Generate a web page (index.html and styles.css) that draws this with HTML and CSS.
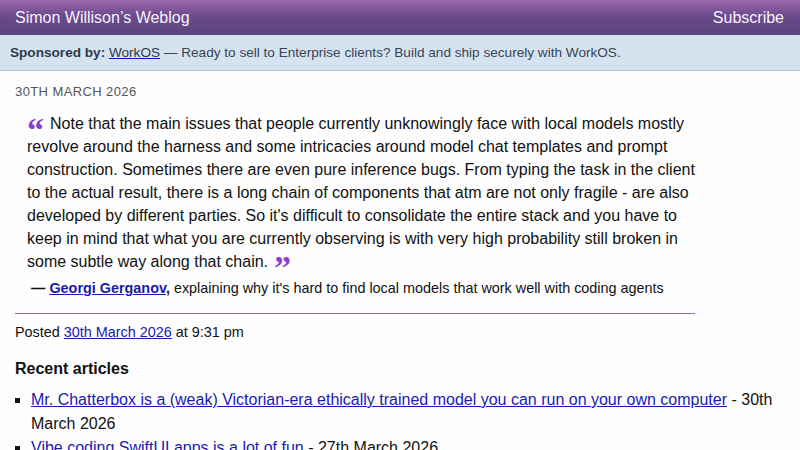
FILE: index.html
```html
<!DOCTYPE html>
<html lang="en">
<head>
<meta charset="utf-8">
<title>Simon Willison’s Weblog</title>
<link rel="stylesheet" href="styles.css">
</head>
<body>
<header class="hdr">
  <a class="hdr-title" href="#">Simon Willison’s Weblog</a>
  <a class="hdr-sub" href="#">Subscribe</a>
</header>
<div class="sponsor">
  <strong>Sponsored by:</strong> <a href="#">WorkOS</a> — Ready to sell to Enterprise clients? Build and ship securely with WorkOS.
</div>
<main class="main">
  <div class="entry">
    <div class="date">30th March 2026</div>
    <blockquote class="quote">
      <p><span class="q-open">“</span>Note that the main issues that people currently unknowingly face with local models mostly revolve around the harness and some intricacies around model chat templates and prompt construction. Sometimes there are even pure inference bugs. From typing the task in the client to the actual result, there is a long chain of components that atm are not only fragile - are also developed by different parties. So it's difficult to consolidate the entire stack and you have to keep in mind that what you are currently observing is with very high probability still broken in some subtle way along that chain.<span class="q-close">”</span></p>
    </blockquote>
    <p class="cite">— <a href="#">Georgi Gerganov</a>, <span class="cite-ctx">explaining why it's hard to find local models that work well with coding agents</span></p>
    <hr class="rule">
    <p class="posted">Posted <a href="#">30th March 2026</a> at 9:31 pm</p>
  </div>
  <h3 class="recent-h">Recent articles</h3>
  <ul class="recent">
    <li><a href="#">Mr. Chatterbox is a (weak) Victorian-era ethically trained model you can run on your own computer</a> - 30th March 2026</li>
    <li><a href="#">Vibe coding SwiftUI apps is a lot of fun</a> - 27th March 2026</li>
  </ul>
</main>
</body>
</html>
```

FILE: styles.css
```css
html, body {
  margin: 0;
  padding: 0;
}
body {
  background: #fefefe;
  color: #111;
  font-family: "Liberation Sans", Arial, Helvetica, sans-serif;
  font-size: 16px;
}
a {
  color: #1a1ab0;
}
.hdr {
  display: flex;
  justify-content: space-between;
  align-items: center;
  height: 35px;
  padding: 0 16px 0 15px;
  box-sizing: border-box;
  background: linear-gradient(to bottom, #9b68ad 0%, #6a4a8c 45%, #5e4480 100%);
}
.hdr a {
  color: #f8f2fb;
  text-decoration: none;
  font-size: 16px;
}
.sponsor {
  height: 36px;
  box-sizing: border-box;
  padding: 0 10px;
  line-height: 36px;
  white-space: nowrap;
  background: #d5e3f0;
  border-bottom: 1px solid #b7c6d6;
  color: #3a4454;
  font-size: 13.6px;
}
.sponsor strong {
  color: #2f3a4a;
}
.sponsor a {
  color: #2f3a4a;
  text-decoration-color: #1a1ab0;
}
.main {
  padding: 0 15px;
}
.entry {
  width: 680px;
}
.date {
  margin-top: 13px;
  font-size: 13px;
  line-height: 16px;
  text-transform: uppercase;
  letter-spacing: 0.4px;
  color: #555;
}
.quote {
  margin: 12px -10px 0 12px;
  padding: 0;
}
.quote p {
  margin: 0;
  font-size: 16px;
  line-height: 23px;
  color: #111;
}
.q-open, .q-close {
  font-family: "Liberation Serif", "Times New Roman", serif;
  font-weight: bold;
  color: #8a3fd0;
  font-size: 34px;
  line-height: 0;
  vertical-align: -12px;
}
.q-open {
  margin-right: 6px;
}
.q-close {
  margin-left: 6px;
}
.cite {
  margin: 3px 0 0 16px;
  font-size: 14.4px;
  line-height: 24px;
  font-weight: bold;
}
.cite-ctx {
  font-weight: normal;
}
.rule {
  margin: 13px 0 0 0;
  border: 0;
  border-top: 1px solid #9a6aa8;
  height: 0;
}
.posted {
  margin: 8px 0 0 0;
  font-size: 14.4px;
  line-height: 20px;
}
.recent-h {
  margin: 16px 0 0 0;
  font-size: 16px;
  line-height: 22px;
}
.recent {
  margin: 8px 0 0 0;
  padding-left: 16px;
  list-style: square;
  font-size: 16px;
  line-height: 24px;
}
```
